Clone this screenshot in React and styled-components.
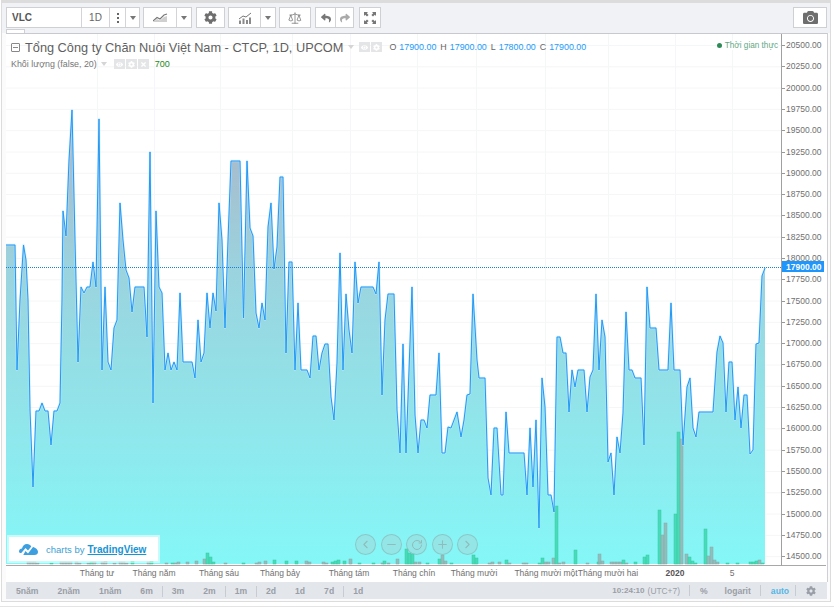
import React from "react";
import styled, { createGlobalStyle } from "styled-components";
import { FaCog, FaCamera, FaEye, FaReply, FaShare, FaTimes } from "react-icons/fa";
import { ChevronLeft, ChevronRight, Minus, Plus, RotateCw, Scale } from "lucide-react";

// line of the price series, in page pixels
const LINE = [
  [6,245],[15,245],[17,370],[20,300],[23.5,245],[26,260],[28,300],[30,410],[33,487],[36,411],[39,411],[42,403],[45,411],[48,411],[51,445],[54,411],[57,411],[60,403],[62,300],
  [63,211],[66,236],[69,160],[72,110],[75,240],[78,362],[81,287],[84,293],[87,287],[90,287],[93,262],[96,287],[99,119],[102,370],[105,287],[108,362],[111,370],[114,328],[117,320],
  [120,203],[123,240],[126,270],[129,278],[132,312],[135,287],[138,287],[141,287],[144,287],[147,337],[150,152],[153,403],[156,211],[159,287],[162,293],[165,370],[168,353],[171,370],[174,362],[177,370],
  [180,293],[183,362],[186,362],[189,362],[192,362],[195,378],[198,320],[201,362],[204,353],[207,293],[210,328],[213,293],[216,311],[219,203],[222,240],[225,328],[228,240],[231,161],[240,161],
  [243.5,318],[247,161],[250,228],[253,236],[256,313],[259,328],[262,303],[265,320],[268,227],[271,203],[274,269],[277,247],[280,177],[283,177],[286,353],[289,262],[292,262],[295,370],[298,303],[301,370],[307,370],[310,378],
  [313,336],[316,336],[319,370],[322,353],[325,344],[328,344],[331,397],[334,420],[337,363],[340,253],[343,370],[346,294],[349,330],[352,353],[355,262],[358,303],[361,287],[373,287],[376,294],[379,262],[382,395],[385,320],[388,294],[394,294],
  [397,410],[400,453],[403,344],[406,453],[409,370],[412,287],[415,415],[418,453],[421,420],[424,420],[427,428],[430,395],[436,395],[439,353],[442,453],[445,453],[448,427],[451,428],[454,420],[457,412],[461,437],[464,420],[467,395],[470,394],[473,294],[477,360],[479,378],[485,378],
  [488,478],[491,495],[494,428],[497,428],[501,495],[503,495],[506,412],[509,453],[524,453],[527,495],[530,428],[533,487],[536,420],[539,528],[542,378],[545,407],[548,495],[551,495],[554,512],[557,337],[560,337],[563,353],[566,353],[569,412],[572,370],[575,387],[578,370],[584,370],[587,412],[590,377],[593,370],[596,294],[599,370],[602,320],[605,337],
  [608,462],[611,453],[614,495],[617,437],[620,453],[623,413],[626,312],[629,370],[632,370],[635,378],[641,378],[644,445],[647,287],[650,328],[656,328],[659,370],[668,370],[671,303],[674,370],[680,370],[683,445],[687,387],[690,378],[693,428],[696,437],[699,412],[713,412],[717,352],[720,336],[723,343],[726,412],[729,362],[732,362],[735,420],[738,387],[741,428],[744,395],[747,395],[750,454],[753,450],[756,344],[759,343],[762,276],[765,268],
];

// volume bars: x, height, g = green / n = grey
const BARS = [
  [27,2,"n"],[30,2,"n"],[33,2,"n"],[36,1,"n"],[50,1,"g"],[60,2,"n"],[63,2,"n"],[66,2,"n"],[69,2,"n"],[75,2,"n"],[78,1,"n"],[87,1,"n"],[90,2,"g"],[93,2,"n"],[101,2,"n"],[104,3,"n"],[113,1,"n"],[119,2,"n"],[122,2,"n"],[125,1,"n"],[131,3,"g"],[147,2,"n"],[150,3,"g"],[165,1,"n"],[171,1,"g"],[174,1,"n"],[177,2,"n"],[186,2,"n"],[195,3,"n"],
  [203,5,"n"],[206,11,"g"],[209,7,"g"],[212,2,"g"],[224,1,"n"],[242,1,"g"],[255,1,"n"],[258,2,"n"],[264,3,"n"],[273,4,"g"],[285,3,"g"],[295,3,"g"],[305,3,"n"],[308,2,"n"],[322,2,"n"],[325,1,"n"],[331,2,"g"],[334,3,"g"],[337,4,"g"],[343,3,"g"],[349,5,"n"],[358,1,"g"],[372,1,"g"],[381,1,"n"],[383,3,"g"],[387,1,"n"],
  [396,5,"n"],[405,15,"g"],[408,11,"g"],[411,10,"g"],[414,2,"n"],[418,2,"n"],[426,1,"g"],[438,5,"g"],[441,9,"n"],[444,3,"n"],[450,1,"g"],[472,9,"g"],[475,6,"g"],[488,1,"n"],[491,2,"n"],[498,2,"n"],[505,4,"g"],[508,1,"n"],[522,1,"n"],[525,1,"n"],[538,1,"g"],[541,6,"g"],[544,2,"n"],[547,2,"n"],[552,6,"n"],[555,58,"g"],[558,1,"n"],[562,2,"n"],
  [574,14,"g"],[586,1,"n"],[597,2,"g"],[598,10,"n"],[601,3,"n"],[610,2,"n"],[613,2,"n"],[616,2,"n"],[619,2,"n"],[622,4,"g"],[625,1,"n"],[634,2,"g"],[643,7,"g"],[646,9,"g"],[658,54,"g"],[661,29,"n"],[664,41,"n"],[674,50,"g"],[677,132,"g"],[680,125,"n"],[685,10,"n"],[688,7,"g"],[691,3,"g"],[694,1,"g"],[704,35,"g"],[707,8,"n"],[710,17,"n"],[713,4,"n"],[716,2,"n"],[726,1,"g"],[736,1,"g"],[749,2,"g"],[752,2,"g"],[755,3,"g"],[758,4,"n"],[761,1,"g"],
];

const PRICES = Array.from({ length: 25 }, (_, i) => 20500 - i * 250);
const GRID_X = [97, 154, 220, 292, 350, 417, 476, 545, 608, 675, 732];
const TIME_LABELS = [
  { text: "Tháng tư", width: 58 },
  { text: "Tháng năm", width: 56 },
  { text: "Tháng sáu", width: 74 },
  { text: "Tháng bảy", width: 48 },
  { text: "Tháng tám", width: 90 },
  { text: "Tháng chín", width: 40 },
  { text: "Tháng mười", width: 80 },
  { text: "Tháng mười một", width: 64 },
  { text: "Tháng mười hai", width: 60 },
  { text: "2020", width: 74, strong: true },
  { text: "5", width: 40 },
];
const RANGES = [["5năm"], ["2năm"], ["1năm"], ["6m", true], ["3m"], ["2m", true], ["1m", true], ["2d"], ["1d"], ["7d", true], ["1d"]];

const linePoints = LINE.map((p) => p.join(",")).join(" ");
const areaPoints = `6,564 ${linePoints} 765,564`;

const GlobalStyle = createGlobalStyle`
  html, body { margin: 0; background: #fff; }
  body { font-family: "Liberation Sans", Arial, sans-serif; }
`;

const Page = styled.div`
  width: 834px;
  height: 607px;
  overflow: hidden;
  border-bottom: 1px solid #e4e4e4;
  box-sizing: border-box;
`;
const Frame = styled.div`
  box-sizing: border-box;
  width: 830px;
  height: 602px;
  margin-left: 1px;
  border: 1px solid #dcdcdc;
  border-top: 3px solid #dcdcdc;
  display: flex;
  flex-direction: column;
  background: #fbfbfc;
`;
const Toolbar = styled.div`
  height: 30px;
  flex: none;
  box-sizing: border-box;
  background: #f0f2f6;
  display: flex;
  align-items: flex-start;
  padding: 4px 0 0 4px;
  position: relative;
`;
const Group = styled.div`
  display: flex;
  height: 21px;
  box-sizing: border-box;
  background: #fff;
  border: 1px solid #cfd0d4;
  margin-left: ${(p) => p.$gap || 0}px;
`;
const Cell = styled.div`
  width: ${(p) => p.$w}px;
  box-sizing: border-box;
  display: flex;
  align-items: center;
  justify-content: ${(p) => (p.$left ? "flex-start" : "center")};
  padding-left: ${(p) => (p.$left ? 5 : 0)}px;
  color: ${(p) => p.$color || "#707070"};
  font-size: 10px;
  font-weight: ${(p) => (p.$bold ? 700 : 400)};
  & + & { border-left: 1px ${(p) => (p.$dotted ? "dotted" : "solid")} #d4d4d8; }
`;
const Caret = styled.span`
  width: 0;
  height: 0;
  margin: ${(p) => p.$margin || "0"};
  border-left: 3.5px solid transparent;
  border-right: 3.5px solid transparent;
  border-top: 4px solid ${(p) => p.$color || "#777"};
`;
const Dots = styled.span`
  display: flex;
  flex-direction: column;
  gap: 2px;
  i { width: 2px; height: 2px; background: #666; display: block; }
`;
const Tab = styled.div`
  position: absolute;
  left: 4px;
  bottom: 0;
  width: 19px;
  height: 4px;
  box-sizing: border-box;
  background: #fff;
  border: 1px solid #cfd0d4;
  border-bottom: 0;
`;
const ChartBox = styled.div`
  position: relative;
  flex: none;
  width: 821px;
  margin-left: 4px;
  display: grid;
  grid-template-columns: 775px 45px;
  grid-template-rows: 531px 17px;
  background: #fff;
  border-top: 1px solid #c8c9ce;
  border-right: 1px solid #cfd0d4;
`;
const Plot = styled.svg`
  display: block;
  width: 775px;
  height: 531px;
`;
const PriceAxis = styled.div`
  position: relative;
  border-left: 1px solid #a0a0a0;
  border-bottom: 1px solid #a8a8a8;
  box-sizing: border-box;
  padding-top: 0.4px;
  margin-bottom: -1px;
`;
const Price = styled.div`
  height: 21.3px;
  display: flex;
  align-items: center;
  padding-left: 4px;
  color: #707070;
  font-size: 8.5px;
  position: relative;
  &::before {
    content: "";
    position: absolute;
    left: 0;
    top: 50%;
    width: 3px;
    height: 1px;
    background: #999;
  }
`;
const CurrentPrice = styled.div`
  position: absolute;
  left: 0;
  top: 227px;
  width: 42px;
  height: 11px;
  background: #1e96fc;
  color: #fff;
  font-size: 8.5px;
  font-weight: 700;
  display: flex;
  align-items: center;
  padding-left: 4px;
  box-sizing: border-box;
`;
const TimeAxis = styled.div`
  grid-column: 1 / 3;
  display: flex;
  align-items: center;
  padding: 0 0 2px 62px;
  border-top: 1px solid #a8a8a8;
  box-sizing: border-box;
`;
const TimeLabel = styled.span`
  width: ${(p) => p.$w}px;
  flex: none;
  display: flex;
  justify-content: center;
  white-space: nowrap;
  font-size: 8.5px;
  color: ${(p) => (p.$strong ? "#555" : "#707070")};
  font-weight: ${(p) => (p.$strong ? 700 : 400)};
`;
const Legend = styled.div`
  position: absolute;
  left: 0;
  top: 0;
  right: 50px;
  padding: 4px 0 0 5px;
  pointer-events: none;
`;
const TitleRow = styled.div`
  display: flex;
  align-items: center;
  height: 18px;
`;
const Collapse = styled.span`
  width: 9px;
  height: 9px;
  border: 1px solid #888;
  border-radius: 1px;
  box-sizing: border-box;
  position: relative;
  margin-right: 5px;
  &::after {
    content: "";
    position: absolute;
    left: 1px;
    right: 1px;
    top: 3px;
    height: 1px;
    background: #888;
  }
`;
const Title = styled.span`
  font-size: 12.75px;
  color: #5f5f5f;
  white-space: nowrap;
`;
const IconChip = styled.span`
  width: 11px;
  height: 10px;
  background: #e4e5e7;
  margin-left: 1px;
  display: flex;
  align-items: center;
  justify-content: center;
  color: #fff;
`;
const Ohlc = styled.span`
  font-size: 8.9px;
  margin-left: ${(p) => p.$gap || 4}px;
  color: #666;
  b { font-weight: 400; color: #1e9cf8; margin-left: 3px; }
`;
const VolumeRow = styled.div`
  display: flex;
  align-items: center;
  height: 14px;
  margin-top: 1px;
  font-size: 8.9px;
  color: #777;
`;
const VolumeValue = styled.span`
  color: #1b8a1b;
  font-size: 9px;
  margin-left: 6px;
`;
const Realtime = styled.div`
  position: absolute;
  right: 49px;
  top: 7px;
  display: flex;
  align-items: center;
  gap: 3px;
  font-size: 8.2px;
  color: #5fa884;
  background: #fff;
  &::before {
    content: "";
    width: 5px;
    height: 5px;
    border-radius: 50%;
    background: #2e8b57;
  }
`;
const LogoBox = styled.div`
  position: absolute;
  left: 1px;
  top: 501px;
  width: 153px;
  height: 28px;
  box-sizing: border-box;
  background: #fff;
  border: 2px solid rgba(255, 255, 255, 0.55);
  background-clip: padding-box;
  display: flex;
  align-items: center;
  font-size: 9.5px;
  color: #3d9fd4;
  padding-left: 10px;
  gap: 8px;
  span b { color: #1794d4; font-weight: 700; text-decoration: underline; margin-left: 3px; font-size: 10px; }
`;
const NavButtons = styled.div`
  position: absolute;
  left: 349px;
  top: 500px;
  display: flex;
  gap: 4.5px;
`;
const NavButton = styled.div`
  width: 21px;
  height: 21px;
  box-sizing: border-box;
  border-radius: 50%;
  border: 1px solid rgba(130, 180, 180, 0.6);
  background: rgba(170, 205, 205, 0.38);
  color: #8fbcbc;
  display: flex;
  align-items: center;
  justify-content: center;
`;
const BottomBar = styled.div`
  height: 17px;
  flex: none;
  width: 821px;
  margin-left: 4px;
  box-sizing: border-box;
  background: #e3e6eb;
  display: flex;
  align-items: center;
  justify-content: space-between;
  font-size: 8.6px;
  font-weight: 700;
  color: #9a9ea6;
`;
const Ranges = styled.div`
  display: flex;
  align-items: center;
  padding-left: 10px;
`;
const RangeItem = styled.span`
  margin-right: 19px;
  position: relative;
  &::after {
    content: "";
    display: ${(p) => (p.$divider ? "block" : "none")};
    position: absolute;
    right: -10px;
    top: 0;
    width: 1px;
    height: 11px;
    background: #c8cbd1;
  }
`;
const Status = styled.div`
  display: flex;
  align-items: center;
  padding-right: 1px;
`;
const StatusItem = styled.span`
  padding: 0 ${(p) => p.$right ?? 10}px 0 ${(p) => p.$left ?? 10}px;
  border-left: ${(p) => (p.$line ? "1px solid #c8cbd1" : "0")};
  color: ${(p) => p.$color || "inherit"};
  font-size: ${(p) => p.$size || 8.6}px;
  display: flex;
  align-items: center;
  height: 11px;
  small { font-size: 8.4px; font-weight: 400; margin-left: 3px; }
`;

const LineIcon = () => (
  <svg width="15" height="9" viewBox="0 0 15 9">
    <path d="M0 8 L4 4.5 L7 6 L11 2 L14 1" fill="none" stroke="#777" strokeWidth="1.1" />
    <path d="M0 9 L4 6 L7 7.5 L11 4 L14 3 V9Z" fill="#cfcfcf" />
  </svg>
);

const IndicatorIcon = () => (
  <svg width="14" height="12" viewBox="0 0 14 12">
    <path d="M1 7 L5 4 L8 5 L13 1" fill="none" stroke="#777" strokeWidth="1" />
    <path d="M1 8.5h2V12H1zM4.5 6.5h2V12h-2zM8 8h2v4H8zM11 5.5h2V12h-2z" fill="#8a8a8a" />
  </svg>
);

const FullscreenIcon = () => (
  <svg width="12" height="12" viewBox="0 0 12 12" fill="#777">
    <path d="M0 0h4L2.8 1.2 4.6 3 3 4.6 1.2 2.8 0 4zM12 0v4l-1.2-1.2L9 4.6 7.4 3l1.8-1.8L8 0zM0 12V8l1.2 1.2L3 7.4 4.6 9l-1.8 1.8L4 12zM12 12H8l1.2-1.2L7.4 9 9 7.4l1.8 1.8L12 8z" />
  </svg>
);

const TradingViewLogo = () => (
  <svg width="19" height="12" viewBox="0 0 19 12">
    <path d="M0 8.5 C0 6.5 1.5 5.5 3 5.5 C3.5 3 5.5 1 8 1 C10 1 11.5 2 12.3 3.5 L9 7.5 L6.5 5 L2.3 10 C1 10 0 9.5 0 8.5Z" fill="#3d9fe0" />
    <path d="M4.3 12 L6.5 8 L9 10.5 L14 4 C16.5 4.5 19 6.5 19 9 C19 10.8 17.5 12 15.5 12Z" fill="#3d9fe0" />
  </svg>
);

const Chart = () => (
  <Plot viewBox="6 34 775 531">
    <defs>
      <linearGradient id="area" gradientUnits="userSpaceOnUse" x1="0" y1="110" x2="0" y2="564">
        <stop offset="0" stopColor="#acb3c6" />
        <stop offset="0.35" stopColor="#9bd3de" />
        <stop offset="1" stopColor="#85f7f7" />
      </linearGradient>
    </defs>
    {PRICES.map((price, i) => (
      <line key={price} x1="6" x2="781" y1={45.5 + i * 21.3} y2={45.5 + i * 21.3} stroke="#f5f6f7" />
    ))}
    {GRID_X.map((x) => (
      <line key={x} x1={x + 0.5} x2={x + 0.5} y1="34" y2="565" stroke="#f5f6f7" />
    ))}
    <polygon points={areaPoints} fill="url(#area)" />
    {BARS.map(([x, h, kind], i) => (
      <rect
        key={i}
        x={x}
        y={564 - h}
        width="3"
        height={h}
        fill={kind === "g" ? "#3dd6ae" : "#8fb5b3"}
        stroke={kind === "g" ? "#3ac9a2" : "#8aa8a8"}
        strokeWidth="0.5"
        fillOpacity="0.85"
      />
    ))}
    <polyline points={linePoints} fill="none" stroke="#bfe3ff" strokeWidth="2.4" strokeOpacity="0.55" strokeLinejoin="round" />
    <polyline points={linePoints} fill="none" stroke="#2199f5" strokeWidth="1" strokeLinejoin="round" />
    <line x1="6" x2="781" y1="267.5" y2="267.5" stroke="#1b80d8" strokeDasharray="1 1" />
  </Plot>
);

export default function App() {
  return (
    <Page>
      <GlobalStyle />
      <Frame>
        <Toolbar>
          <Group>
            <Cell $w={74} $left $bold $color="#555">VLC</Cell>
            <Cell $w={28} $color="#666">1D</Cell>
            <Cell $w={16}><Dots><i /><i /><i /></Dots></Cell>
            <Cell $w={14} $dotted><Caret /></Cell>
          </Group>
          <Group $gap={3}>
            <Cell $w={32}><LineIcon /></Cell>
            <Cell $w={15}><Caret /></Cell>
          </Group>
          <Group $gap={4}>
            <Cell $w={27}><FaCog size={13} color="#6e6e6e" /></Cell>
          </Group>
          <Group $gap={3}>
            <Cell $w={31}><IndicatorIcon /></Cell>
            <Cell $w={15}><Caret /></Cell>
          </Group>
          <Group $gap={3}>
            <Cell $w={30}><Scale size={14} color="#777" strokeWidth={1.3} /></Cell>
          </Group>
          <Group $gap={4}>
            <Cell $w={19}><FaReply size={10} color="#777" /></Cell>
            <Cell $w={18}><FaShare size={10} color="#aaa" /></Cell>
          </Group>
          <Group $gap={5}>
            <Cell $w={20}><FullscreenIcon /></Cell>
          </Group>
          <Group $gap={412}>
            <Cell $w={32}><FaCamera size={15} color="#6e6e6e" /></Cell>
          </Group>
          <Tab />
        </Toolbar>
        <ChartBox>
          <Chart />
          <PriceAxis>
            {PRICES.map((price) => (
              <Price key={price}>{price}.00</Price>
            ))}
            <CurrentPrice>17900.00</CurrentPrice>
          </PriceAxis>
          <TimeAxis>
            {TIME_LABELS.map((label) => (
              <TimeLabel key={label.text} $w={label.width} $strong={label.strong}>{label.text}</TimeLabel>
            ))}
          </TimeAxis>
          <Legend>
            <TitleRow>
              <Collapse />
              <Title>Tổng Công ty Chăn Nuôi Việt Nam - CTCP, 1D, UPCOM</Title>
              <Caret $color="#d5d5d5" $margin="0 4px 0 5px" />
              <IconChip><FaEye size={7} /></IconChip>
              <IconChip><FaCog size={7} /></IconChip>
              <Ohlc $gap={7}>O<b>17900.00</b></Ohlc>
              <Ohlc>H<b>17900.00</b></Ohlc>
              <Ohlc>L<b>17800.00</b></Ohlc>
              <Ohlc>C<b>17900.00</b></Ohlc>
            </TitleRow>
            <VolumeRow>
              Khối lượng (false, 20)
              <Caret $color="#d5d5d5" $margin="0 6px 0 4px" />
              <IconChip><FaEye size={7} /></IconChip>
              <IconChip><FaCog size={7} /></IconChip>
              <IconChip><FaTimes size={7} /></IconChip>
              <VolumeValue>700</VolumeValue>
            </VolumeRow>
          </Legend>
          <Realtime>Thời gian thực</Realtime>
          <LogoBox>
            <TradingViewLogo />
            <span>charts by<b>TradingView</b></span>
          </LogoBox>
          <NavButtons>
            <NavButton><ChevronLeft size={13} /></NavButton>
            <NavButton><Minus size={13} /></NavButton>
            <NavButton><RotateCw size={12} /></NavButton>
            <NavButton><Plus size={13} /></NavButton>
            <NavButton><ChevronRight size={13} /></NavButton>
          </NavButtons>
        </ChartBox>
        <BottomBar>
          <Ranges>
            {RANGES.map(([text, divider], i) => (
              <RangeItem key={i} $divider={divider}>{text}</RangeItem>
            ))}
          </Ranges>
          <Status>
            <StatusItem $right={9} $size={8.1}>10:24:10<small>(UTC+7)</small></StatusItem>
            <StatusItem $line $left={10} $right={0}>%</StatusItem>
            <StatusItem $left={17} $right={9}>logarit</StatusItem>
            <StatusItem $line $left={10} $right={6} $color="#55b6e6">auto</StatusItem>
            <StatusItem $line $right={10}><FaCog size={10} color="#9a9ea6" /></StatusItem>
          </Status>
        </BottomBar>
      </Frame>
    </Page>
  );
}
